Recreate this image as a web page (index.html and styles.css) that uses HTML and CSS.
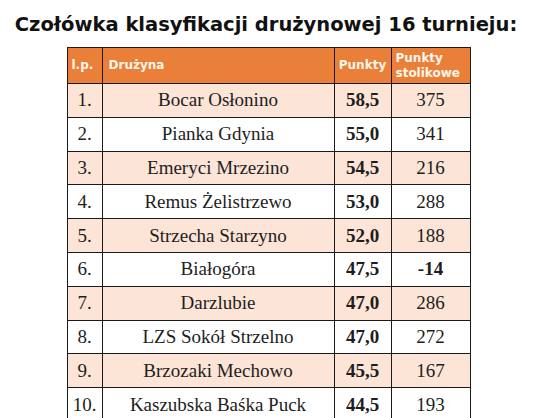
FILE: index.html
```html
<!DOCTYPE html>
<html lang="pl">
<head>
  <meta charset="utf-8">
  <title>Klasyfikacja drużynowa</title>
  <link rel="stylesheet" href="styles.css">
</head>
<body>
  <div class="page">
    <h1 class="title">Czołówka klasyfikacji drużynowej 16 turnieju:</h1>
    <table class="ranking">
      <thead>
        <tr>
          <th class="lp">l.p.</th>
          <th class="team">Drużyna</th>
          <th class="pts">Punkty</th>
          <th class="table-pts">Punkty stolikowe</th>
        </tr>
      </thead>
      <tbody>
        <tr class="odd"><td>1.</td><td>Bocar Osłonino</td><td class="bold">58,5</td><td>375</td></tr>
        <tr><td>2.</td><td>Pianka Gdynia</td><td class="bold">55,0</td><td>341</td></tr>
        <tr class="odd"><td>3.</td><td>Emeryci Mrzezino</td><td class="bold">54,5</td><td>216</td></tr>
        <tr><td>4.</td><td>Remus Żelistrzewo</td><td class="bold">53,0</td><td>288</td></tr>
        <tr class="odd"><td>5.</td><td>Strzecha Starzyno</td><td class="bold">52,0</td><td>188</td></tr>
        <tr><td>6.</td><td>Białogóra</td><td class="bold">47,5</td><td class="bold">-14</td></tr>
        <tr class="odd"><td>7.</td><td>Darzlubie</td><td class="bold">47,0</td><td>286</td></tr>
        <tr><td>8.</td><td>LZS Sokół Strzelno</td><td class="bold">47,0</td><td>272</td></tr>
        <tr class="odd"><td>9.</td><td>Brzozaki Mechowo</td><td class="bold">45,5</td><td>167</td></tr>
        <tr><td>10.</td><td>Kaszubska Baśka Puck</td><td class="bold">44,5</td><td>193</td></tr>
      </tbody>
    </table>
  </div>
</body>
</html>
```

FILE: styles.css
```css
body {
  margin: 0;
  background-color: #ffffff;
}

.page {
  display: flex;
  flex-direction: column;
  align-items: center;
  padding-top: 14px;
}

.title {
  margin: 0 0 12px 0;
  font-family: "DejaVu Sans", Verdana, sans-serif;
  font-size: 19.5px;
  font-weight: bold;
  line-height: 21px;
  color: #111111;
  padding-right: 8px;
}

.ranking {
  border-collapse: collapse;
  width: 404px;
  margin-left: -3px;
  font-family: "Liberation Serif", "Times New Roman", serif;
  font-size: 19px;
  color: #1e1e1e;
}

.ranking th {
  background-color: #ea7f3a;
  color: #fff6ea;
  font-family: "DejaVu Sans", Verdana, sans-serif;
  font-size: 12px;
  font-weight: bold;
  line-height: 15px;
  height: 35px;
  border: 1px solid #1a1a1a;
  padding: 0 4px;
}

.ranking th.lp {
  width: 26px;
  text-align: left;
}

.ranking th.team {
  text-align: left;
  padding-left: 6px;
}

.ranking th.pts {
  width: 50px;
  text-align: center;
  padding: 0 3px;
}

.ranking th.table-pts {
  width: 70px;
  text-align: left;
  padding: 0 4px;
}

.ranking td {
  border: 1px solid #1a1a1a;
  height: 32.8px;
  padding: 0;
  text-align: center;
}

.ranking tr.odd td {
  background-color: #fce4d6;
}

.ranking td.bold {
  font-weight: bold;
}
```
